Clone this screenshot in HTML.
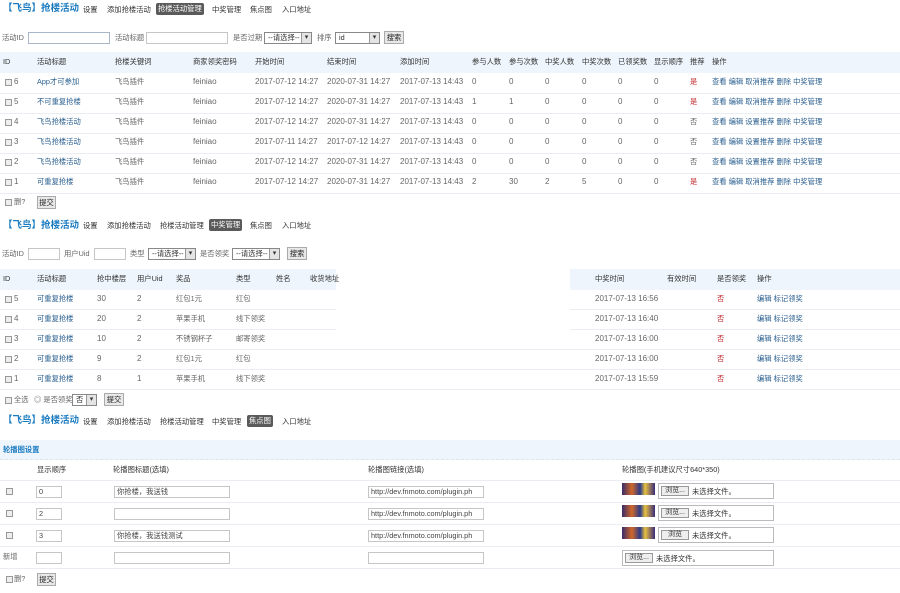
<!DOCTYPE html>
<html><head><meta charset="utf-8"><style>
*{margin:0;padding:0;box-sizing:border-box}
body{width:900px;height:593px;background:#fff;position:relative;overflow:hidden;font-family:"Liberation Sans","Noto Sans CJK SC",sans-serif;font-size:8px;color:#666}
.a{position:absolute;white-space:nowrap;line-height:10px}
.tt{color:#1a7bc0;font-size:9.5px;font-weight:bold;line-height:12px}
.nv{color:#333;font-size:7.3px}
.on{background:#5a5a5a;color:#fff;padding:1px 2px;border-radius:2px;font-size:7.3px}
.h{color:#333;font-size:7.3px}
.l{color:#2a5f8f;font-size:7.3px}
.c{font-size:7.3px}
.r{color:#c0282d}
.band{position:absolute;background:#eef5fc}
.ln{position:absolute;height:1px;background:#eaeef2}
.in{position:absolute;border:1px solid #a9b8c8;background:#fff;height:12px}
.in2{position:absolute;border:1px solid #c6c6c6;background:#fff;height:12px;font-size:7.3px;line-height:10px;padding-left:2px;color:#444;white-space:nowrap;overflow:hidden}
.sel{position:absolute;border:1px solid #888;background:#fff;height:12px;font-size:7.3px;line-height:10px;padding-left:3px;color:#333}
.sel:after{content:"▾";position:absolute;right:0;top:0;width:9px;height:10px;background:#e4e4e4;border-left:1px solid #999;text-align:center;font-size:7px}
.btn{position:absolute;border:1px solid #aaa;background:#e8e8e8;height:13px;font-size:7.3px;line-height:11px;text-align:center;color:#222}
.cb{position:absolute;width:7px;height:7px;border:1px solid #999;background:#eee}
.file{position:absolute;border:1px solid #bbb;background:#fff;height:16px;width:116px}
.file b{position:absolute;left:2px;top:2px;width:28px;height:10px;border:1px solid #999;background:#eee;font-weight:normal;font-size:7px;line-height:8px;text-align:center;color:#333}
.file i{position:absolute;left:33px;top:3px;font-style:normal;font-size:7.3px;color:#333;line-height:9px}
.img{position:absolute;width:33px;height:12px;background:linear-gradient(90deg,#3a2a6a,#d0682a 30%,#2a3a8a 55%,#e8c040 70%,#3a2a7a)}
</style></head><body>

<!-- Section 1 nav -->
<div class="a tt" style="left:3px;top:3px">【飞鸟】抢楼活动</div>
<div class="a nv" style="left:83px;top:5px">设置</div>
<div class="a nv" style="left:107px;top:5px">添加抢楼活动</div>
<div class="a on" style="left:156px;top:3px">抢楼活动管理</div>
<div class="a nv" style="left:212px;top:5px">中奖管理</div>
<div class="a nv" style="left:250px;top:5px">焦点图</div>
<div class="a nv" style="left:282px;top:5px">入口地址</div>

<div class="a c" style="left:2px;top:33px">活动ID</div>
<div class="in" style="left:28px;top:32px;width:82px"></div>
<div class="a c" style="left:115px;top:33px">活动标题</div>
<div class="in2" style="left:146px;top:32px;width:82px"></div>
<div class="a c" style="left:233px;top:33px">是否过期</div>
<div class="sel" style="left:264px;top:32px;width:48px">--请选择--</div>
<div class="a c" style="left:317px;top:33px">排序</div>
<div class="sel" style="left:335px;top:32px;width:45px">id</div>
<div class="btn" style="left:384px;top:31px;width:20px">搜索</div>

<div class="band" style="left:0;top:52px;width:900px;height:21px"></div>
<div class="a h" style="left:3px;top:57px">ID</div>
<div class="a h" style="left:37px;top:57px">活动标题</div>
<div class="a h" style="left:115px;top:57px">抢楼关键词</div>
<div class="a h" style="left:193px;top:57px">商家领奖密码</div>
<div class="a h" style="left:255px;top:57px">开始时间</div>
<div class="a h" style="left:327px;top:57px">结束时间</div>
<div class="a h" style="left:400px;top:57px">添加时间</div>
<div class="a h" style="left:472px;top:57px">参与人数</div>
<div class="a h" style="left:509px;top:57px">参与次数</div>
<div class="a h" style="left:545px;top:57px">中奖人数</div>
<div class="a h" style="left:582px;top:57px">中奖次数</div>
<div class="a h" style="left:618px;top:57px">已领奖数</div>
<div class="a h" style="left:654px;top:57px">显示顺序</div>
<div class="a h" style="left:690px;top:57px">推荐</div>
<div class="a h" style="left:712px;top:57px">操作</div>

<div class="ln" style="left:0;top:93px;width:900px"></div>
<div class="ln" style="left:0;top:113px;width:900px"></div>
<div class="ln" style="left:0;top:133px;width:900px"></div>
<div class="ln" style="left:0;top:153px;width:900px"></div>
<div class="ln" style="left:0;top:173px;width:900px"></div>
<div class="ln" style="left:0;top:193px;width:900px"></div>

<div class="cb" style="left:5px;top:79px"></div><div class="a" style="left:14px;top:77px">6</div>
<div class="a l" style="left:37px;top:77px">App才可参加</div><div class="a c" style="left:115px;top:77px">飞鸟插件</div><div class="a" style="left:193px;top:77px">feiniao</div>
<div class="a" style="left:255px;top:77px">2017-07-12 14:27</div><div class="a" style="left:327px;top:77px">2020-07-31 14:27</div><div class="a" style="left:400px;top:77px">2017-07-13 14:43</div>
<div class="a" style="left:472px;top:77px">0</div><div class="a" style="left:509px;top:77px">0</div><div class="a" style="left:545px;top:77px">0</div><div class="a" style="left:582px;top:77px">0</div><div class="a" style="left:618px;top:77px">0</div><div class="a" style="left:654px;top:77px">0</div>
<div class="a r c" style="left:690px;top:77px">是</div><div class="a l" style="left:712px;top:77px">查看 编辑 取消推荐 删除 中奖管理</div>

<div class="cb" style="left:5px;top:99px"></div><div class="a" style="left:14px;top:97px">5</div>
<div class="a l" style="left:37px;top:97px">不可重复抢楼</div><div class="a c" style="left:115px;top:97px">飞鸟插件</div><div class="a" style="left:193px;top:97px">feiniao</div>
<div class="a" style="left:255px;top:97px">2017-07-12 14:27</div><div class="a" style="left:327px;top:97px">2020-07-31 14:27</div><div class="a" style="left:400px;top:97px">2017-07-13 14:43</div>
<div class="a" style="left:472px;top:97px">1</div><div class="a" style="left:509px;top:97px">1</div><div class="a" style="left:545px;top:97px">0</div><div class="a" style="left:582px;top:97px">0</div><div class="a" style="left:618px;top:97px">0</div><div class="a" style="left:654px;top:97px">0</div>
<div class="a r c" style="left:690px;top:97px">是</div><div class="a l" style="left:712px;top:97px">查看 编辑 取消推荐 删除 中奖管理</div>

<div class="cb" style="left:5px;top:119px"></div><div class="a" style="left:14px;top:117px">4</div>
<div class="a l" style="left:37px;top:117px">飞鸟抢楼活动</div><div class="a c" style="left:115px;top:117px">飞鸟插件</div><div class="a" style="left:193px;top:117px">feiniao</div>
<div class="a" style="left:255px;top:117px">2017-07-12 14:27</div><div class="a" style="left:327px;top:117px">2020-07-31 14:27</div><div class="a" style="left:400px;top:117px">2017-07-13 14:43</div>
<div class="a" style="left:472px;top:117px">0</div><div class="a" style="left:509px;top:117px">0</div><div class="a" style="left:545px;top:117px">0</div><div class="a" style="left:582px;top:117px">0</div><div class="a" style="left:618px;top:117px">0</div><div class="a" style="left:654px;top:117px">0</div>
<div class="a c" style="left:690px;top:117px">否</div><div class="a l" style="left:712px;top:117px">查看 编辑 设置推荐 删除 中奖管理</div>

<div class="cb" style="left:5px;top:139px"></div><div class="a" style="left:14px;top:137px">3</div>
<div class="a l" style="left:37px;top:137px">飞鸟抢楼活动</div><div class="a c" style="left:115px;top:137px">飞鸟插件</div><div class="a" style="left:193px;top:137px">feiniao</div>
<div class="a" style="left:255px;top:137px">2017-07-11 14:27</div><div class="a" style="left:327px;top:137px">2017-07-12 14:27</div><div class="a" style="left:400px;top:137px">2017-07-13 14:43</div>
<div class="a" style="left:472px;top:137px">0</div><div class="a" style="left:509px;top:137px">0</div><div class="a" style="left:545px;top:137px">0</div><div class="a" style="left:582px;top:137px">0</div><div class="a" style="left:618px;top:137px">0</div><div class="a" style="left:654px;top:137px">0</div>
<div class="a c" style="left:690px;top:137px">否</div><div class="a l" style="left:712px;top:137px">查看 编辑 设置推荐 删除 中奖管理</div>

<div class="cb" style="left:5px;top:159px"></div><div class="a" style="left:14px;top:157px">2</div>
<div class="a l" style="left:37px;top:157px">飞鸟抢楼活动</div><div class="a c" style="left:115px;top:157px">飞鸟插件</div><div class="a" style="left:193px;top:157px">feiniao</div>
<div class="a" style="left:255px;top:157px">2017-07-12 14:27</div><div class="a" style="left:327px;top:157px">2020-07-31 14:27</div><div class="a" style="left:400px;top:157px">2017-07-13 14:43</div>
<div class="a" style="left:472px;top:157px">0</div><div class="a" style="left:509px;top:157px">0</div><div class="a" style="left:545px;top:157px">0</div><div class="a" style="left:582px;top:157px">0</div><div class="a" style="left:618px;top:157px">0</div><div class="a" style="left:654px;top:157px">0</div>
<div class="a c" style="left:690px;top:157px">否</div><div class="a l" style="left:712px;top:157px">查看 编辑 设置推荐 删除 中奖管理</div>

<div class="cb" style="left:5px;top:179px"></div><div class="a" style="left:14px;top:177px">1</div>
<div class="a l" style="left:37px;top:177px">可重复抢楼</div><div class="a c" style="left:115px;top:177px">飞鸟插件</div><div class="a" style="left:193px;top:177px">feiniao</div>
<div class="a" style="left:255px;top:177px">2017-07-12 14:27</div><div class="a" style="left:327px;top:177px">2020-07-31 14:27</div><div class="a" style="left:400px;top:177px">2017-07-13 14:43</div>
<div class="a" style="left:472px;top:177px">2</div><div class="a" style="left:509px;top:177px">30</div><div class="a" style="left:545px;top:177px">2</div><div class="a" style="left:582px;top:177px">5</div><div class="a" style="left:618px;top:177px">0</div><div class="a" style="left:654px;top:177px">0</div>
<div class="a r c" style="left:690px;top:177px">是</div><div class="a l" style="left:712px;top:177px">查看 编辑 取消推荐 删除 中奖管理</div>

<div class="cb" style="left:5px;top:199px"></div><div class="a c" style="left:14px;top:197px">删?</div>
<div class="btn" style="left:37px;top:196px;width:19px">提交</div>

<!-- Section 2 -->
<div class="a tt" style="left:3px;top:220px">【飞鸟】抢楼活动</div>
<div class="a nv" style="left:83px;top:221px">设置</div>
<div class="a nv" style="left:107px;top:221px">添加抢楼活动</div>
<div class="a nv" style="left:160px;top:221px">抢楼活动管理</div>
<div class="a on" style="left:209px;top:219px">中奖管理</div>
<div class="a nv" style="left:250px;top:221px">焦点图</div>
<div class="a nv" style="left:282px;top:221px">入口地址</div>

<div class="a c" style="left:2px;top:249px">活动ID</div>
<div class="in2" style="left:28px;top:248px;width:32px"></div>
<div class="a c" style="left:64px;top:249px">用户Uid</div>
<div class="in2" style="left:94px;top:248px;width:32px"></div>
<div class="a c" style="left:130px;top:249px">类型</div>
<div class="sel" style="left:148px;top:248px;width:48px">--请选择--</div>
<div class="a c" style="left:200px;top:249px">是否领奖</div>
<div class="sel" style="left:232px;top:248px;width:48px">--请选择--</div>
<div class="btn" style="left:287px;top:247px;width:20px">搜索</div>

<div class="band" style="left:0;top:269px;width:336px;height:21px"></div>
<div class="band" style="left:570px;top:269px;width:330px;height:21px"></div>
<div class="a h" style="left:3px;top:274px">ID</div>
<div class="a h" style="left:37px;top:274px">活动标题</div>
<div class="a h" style="left:97px;top:274px">抢中楼层</div>
<div class="a h" style="left:137px;top:274px">用户Uid</div>
<div class="a h" style="left:176px;top:274px">奖品</div>
<div class="a h" style="left:236px;top:274px">类型</div>
<div class="a h" style="left:276px;top:274px">姓名</div>
<div class="a h" style="left:310px;top:274px">收货地址</div>
<div class="a h" style="left:595px;top:274px">中奖时间</div>
<div class="a h" style="left:667px;top:274px">有效时间</div>
<div class="a h" style="left:717px;top:274px">是否领奖</div>
<div class="a h" style="left:757px;top:274px">操作</div>

<div class="ln" style="left:0;top:309px;width:336px"></div><div class="ln" style="left:570px;top:309px;width:330px"></div>
<div class="ln" style="left:0;top:329px;width:336px"></div><div class="ln" style="left:570px;top:329px;width:330px"></div>
<div class="ln" style="left:0;top:349px;width:900px"></div>
<div class="ln" style="left:0;top:369px;width:900px"></div>
<div class="ln" style="left:0;top:389px;width:900px"></div>

<div class="cb" style="left:5px;top:296px"></div><div class="a" style="left:14px;top:294px">5</div><div class="a l" style="left:37px;top:294px">可重复抢楼</div><div class="a" style="left:97px;top:294px">30</div><div class="a" style="left:137px;top:294px">2</div><div class="a c" style="left:176px;top:294px">红包1元</div><div class="a c" style="left:236px;top:294px">红包</div><div class="a" style="left:595px;top:294px">2017-07-13 16:56</div><div class="a r c" style="left:717px;top:294px">否</div><div class="a l" style="left:757px;top:294px">编辑 标记领奖</div>
<div class="cb" style="left:5px;top:316px"></div><div class="a" style="left:14px;top:314px">4</div><div class="a l" style="left:37px;top:314px">可重复抢楼</div><div class="a" style="left:97px;top:314px">20</div><div class="a" style="left:137px;top:314px">2</div><div class="a c" style="left:176px;top:314px">苹果手机</div><div class="a c" style="left:236px;top:314px">线下领奖</div><div class="a" style="left:595px;top:314px">2017-07-13 16:40</div><div class="a r c" style="left:717px;top:314px">否</div><div class="a l" style="left:757px;top:314px">编辑 标记领奖</div>
<div class="cb" style="left:5px;top:336px"></div><div class="a" style="left:14px;top:334px">3</div><div class="a l" style="left:37px;top:334px">可重复抢楼</div><div class="a" style="left:97px;top:334px">10</div><div class="a" style="left:137px;top:334px">2</div><div class="a c" style="left:176px;top:334px">不锈钢杯子</div><div class="a c" style="left:236px;top:334px">邮寄领奖</div><div class="a" style="left:595px;top:334px">2017-07-13 16:00</div><div class="a r c" style="left:717px;top:334px">否</div><div class="a l" style="left:757px;top:334px">编辑 标记领奖</div>
<div class="cb" style="left:5px;top:356px"></div><div class="a" style="left:14px;top:354px">2</div><div class="a l" style="left:37px;top:354px">可重复抢楼</div><div class="a" style="left:97px;top:354px">9</div><div class="a" style="left:137px;top:354px">2</div><div class="a c" style="left:176px;top:354px">红包1元</div><div class="a c" style="left:236px;top:354px">红包</div><div class="a" style="left:595px;top:354px">2017-07-13 16:00</div><div class="a r c" style="left:717px;top:354px">否</div><div class="a l" style="left:757px;top:354px">编辑 标记领奖</div>
<div class="cb" style="left:5px;top:376px"></div><div class="a" style="left:14px;top:374px">1</div><div class="a l" style="left:37px;top:374px">可重复抢楼</div><div class="a" style="left:97px;top:374px">8</div><div class="a" style="left:137px;top:374px">1</div><div class="a c" style="left:176px;top:374px">苹果手机</div><div class="a c" style="left:236px;top:374px">线下领奖</div><div class="a" style="left:595px;top:374px">2017-07-13 15:59</div><div class="a r c" style="left:717px;top:374px">否</div><div class="a l" style="left:757px;top:374px">编辑 标记领奖</div>

<div class="cb" style="left:5px;top:397px"></div><div class="a c" style="left:14px;top:395px">全选</div>
<div class="a c" style="left:34px;top:395px">◎ 是否领奖</div>
<div class="sel" style="left:72px;top:394px;width:25px">否</div>
<div class="btn" style="left:104px;top:393px;width:20px">提交</div>

<!-- Section 3 -->
<div class="a tt" style="left:3px;top:415px">【飞鸟】抢楼活动</div>
<div class="a nv" style="left:83px;top:417px">设置</div>
<div class="a nv" style="left:107px;top:417px">添加抢楼活动</div>
<div class="a nv" style="left:160px;top:417px">抢楼活动管理</div>
<div class="a nv" style="left:212px;top:417px">中奖管理</div>
<div class="a on" style="left:247px;top:415px">焦点图</div>
<div class="a nv" style="left:282px;top:417px">入口地址</div>

<div class="band" style="left:0;top:440px;width:900px;height:20px;border-bottom:1px dashed #dde4ea"></div>
<div class="a" style="left:3px;top:445px;color:#1a7bc0;font-weight:bold;font-size:7.3px">轮播图设置</div>

<div class="a h" style="left:37px;top:465px">显示顺序</div>
<div class="a h" style="left:113px;top:465px">轮播图标题(选填)</div>
<div class="a h" style="left:368px;top:465px">轮播图链接(选填)</div>
<div class="a h" style="left:622px;top:465px">轮播图(手机建议尺寸640*350)</div>
<div class="ln" style="left:0;top:480px;width:900px"></div>
<div class="ln" style="left:0;top:502px;width:900px"></div>
<div class="ln" style="left:0;top:524px;width:900px"></div>
<div class="ln" style="left:0;top:546px;width:900px"></div>
<div class="ln" style="left:0;top:568px;width:900px"></div>

<div class="cb" style="left:6px;top:488px"></div>
<div class="in2" style="left:36px;top:486px;width:26px">0</div>
<div class="in2" style="left:114px;top:486px;width:116px">你抢楼，我送钱</div>
<div class="in2" style="left:368px;top:486px;width:116px">http://dev.fnmoto.com/plugin.ph</div>
<div class="img" style="left:622px;top:483px"></div>
<div class="file" style="left:658px;top:483px"><b>浏览...</b><i>未选择文件。</i></div>

<div class="cb" style="left:6px;top:510px"></div>
<div class="in2" style="left:36px;top:508px;width:26px">2</div>
<div class="in2" style="left:114px;top:508px;width:116px"></div>
<div class="in2" style="left:368px;top:508px;width:116px">http://dev.fnmoto.com/plugin.ph</div>
<div class="img" style="left:622px;top:505px"></div>
<div class="file" style="left:658px;top:505px"><b>浏览...</b><i>未选择文件。</i></div>

<div class="cb" style="left:6px;top:532px"></div>
<div class="in2" style="left:36px;top:530px;width:26px">3</div>
<div class="in2" style="left:114px;top:530px;width:116px">你抢楼，我送钱测试</div>
<div class="in2" style="left:368px;top:530px;width:116px">http://dev.fnmoto.com/plugin.ph</div>
<div class="img" style="left:622px;top:527px"></div>
<div class="file" style="left:658px;top:527px"><b>浏览</b><i>未选择文件。</i></div>

<div class="a c" style="left:3px;top:552px">新增</div>
<div class="in2" style="left:36px;top:552px;width:26px"></div>
<div class="in2" style="left:114px;top:552px;width:116px"></div>
<div class="in2" style="left:368px;top:552px;width:116px"></div>
<div class="file" style="left:622px;top:550px;width:152px"><b>浏览...</b><i>未选择文件。</i></div>

<div class="cb" style="left:6px;top:576px"></div><div class="a c" style="left:14px;top:574px">删?</div>
<div class="btn" style="left:37px;top:573px;width:19px">提交</div>

</body></html>
